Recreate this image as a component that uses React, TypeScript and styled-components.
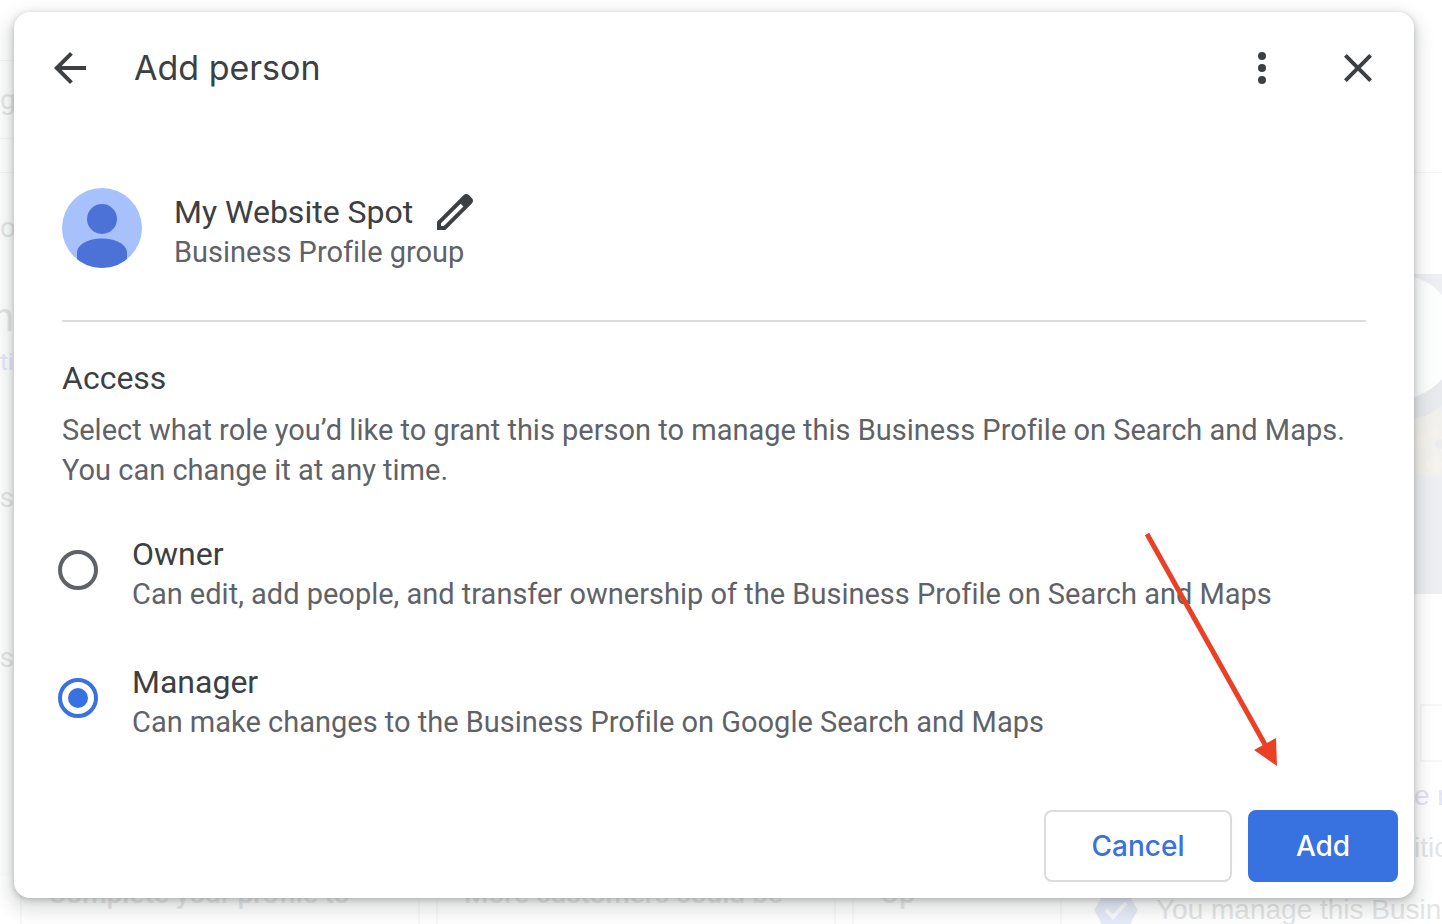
import React, { useState } from "react";
import styled, { createGlobalStyle } from "styled-components";

const GlobalStyle = createGlobalStyle`
  *, *::before, *::after { box-sizing: border-box; }
  html, body, #root { height: 100%; }
  body {
    margin: 0;
    background: #fff;
    font-family: Roboto, "Liberation Sans", sans-serif;
    font-variant-ligatures: none;
  }
  h1, h2, p { margin: 0; font-weight: 400; }
`;

const Page = styled.div`
  display: grid;
  grid-template: minmax(100%, auto) / minmax(0, 1fr);
  min-height: 100%;
  overflow: hidden;
`;

const Backdrop = styled.div`
  grid-area: 1 / 1;
  display: grid;
  grid-template: minmax(0, 1fr) 48px / 14px minmax(0, 1fr) 28px;
  height: 100vh;
  overflow: hidden;
  color: #e4e5e5;
  white-space: nowrap;
`;

const LeftStrip = styled.div`
  grid-area: 1 / 1;
  display: flex;
  flex-direction: column;
  padding-top: 60px;
  background: linear-gradient(#fff 28px, #fdfdfd 28px);
`;

const StripText = styled.span<{ $height: number; $size?: number; $tint?: string; $line?: boolean; $end?: boolean }>`
  display: flex;
  flex: none;
  align-items: center;
  justify-content: ${(p) => (p.$end ? "flex-end" : "flex-start")};
  width: 100%;
  height: ${(p) => p.$height}px;
  border-top: ${(p) => (p.$line ? "1px solid #f4f5f5" : "0")};
  color: ${(p) => p.$tint ?? "inherit"};
  font-size: ${(p) => p.$size ?? 28}px;
`;

const RightStrip = styled.div`
  grid-area: 1 / 3;
  display: flex;
  flex-direction: column;
  overflow: hidden;
  font-family: "Liberation Sans", sans-serif;
`;

const Rule = styled.div`
  height: 102px;
  margin-top: 172px;
  border-top: 1px solid #f6f6f7;
`;

const Photo = styled.svg`
  display: block;
  flex: none;
  width: 28px;
  height: 320px;
`;

const Outline = styled.div`
  flex: none;
  height: 58px;
  margin: 110px 0 8px 6px;
  border: 2px solid #f6f8f8;
  border-right: 0;
`;

const BottomStrip = styled.div`
  grid-area: 2 / 1 / 3 / 4;
  display: flex;
  align-items: flex-start;
  gap: 16px;
  padding-left: 20px;
  font-size: 28px;
  line-height: 36px;
`;

const Card = styled.div<{ $width: number; $open?: boolean }>`
  flex: none;
  width: ${(p) => p.$width}px;
  height: 48px;
  padding-left: 26px;
  border: solid #f8f8f9;
  border-width: ${(p) => (p.$open ? "0 0 0 2px" : "0 2px")};
  color: #e8e9e9;
  font-weight: 500;
`;

const Notice = styled.div`
  display: flex;
  flex: none;
  align-items: center;
  gap: 18px;
  height: 48px;
  padding: 20px 0 0 32px;
  border-left: 2px solid #f8f8f9;
  font-family: "Liberation Sans", sans-serif;

  svg { width: 44px; height: 44px; flex: none; }
`;

const Dialog = styled.form`
  grid-area: 1 / 1;
  position: relative;
  display: flex;
  flex-direction: column;
  margin: 12px 28px 26px 14px;
  border-radius: 16px;
  background: #fff;
  color: #3c4043;
  box-shadow: 0 2px 6px rgba(60, 64, 67, 0.3), 0 8px 16px 6px rgba(60, 64, 67, 0.15);
`;

const Header = styled.header`
  display: flex;
  align-items: center;
  height: 112px;
  padding: 0 32px;
  gap: 40px;
`;

const Title = styled.h1`
  flex: 1;
  font-family: Inter, "Liberation Sans", sans-serif;
  font-size: 34px;
  line-height: 48px;
`;

const Tools = styled.div`
  display: flex;
  gap: 48px;
`;

const IconButton = styled.button`
  display: block;
  flex: none;
  width: 48px;
  height: 48px;
  padding: 0;
  border: 0;
  background: none;
  color: #3c4043;
  cursor: pointer;

  svg { display: block; width: 100%; height: 100%; fill: currentColor; }
`;

const Body = styled.div`
  display: flex;
  flex-direction: column;
  padding: 64px 48px 0;
`;

const Profile = styled.section`
  display: flex;
  gap: 32px;
  padding-bottom: 52px;
  border-bottom: 2px solid #dadce0;
`;

const Avatar = styled.svg`
  flex: none;
  width: 80px;
  height: 80px;
`;

const NameRow = styled.div`
  display: flex;
  align-items: center;
  gap: 18px;
  height: 48px;
`;

const Heading = styled.h2`
  font-size: 32px;
  line-height: 40px;
`;

const Support = styled.p<{ $line?: number }>`
  color: #5f6368;
  font-size: 29px;
  line-height: ${(p) => p.$line ?? 40}px;
`;

const Access = styled.section`
  display: flex;
  flex-direction: column;
  gap: 12px;
  padding-top: 36px;
`;

const Options = styled.div`
  display: flex;
  flex-direction: column;
  gap: 48px;
  margin: 44px 0 0 -4px;
`;

const Option = styled.label`
  display: flex;
  align-items: flex-start;
  gap: 34px;
  cursor: pointer;
`;

const Radio = styled.input`
  appearance: none;
  flex: none;
  width: 40px;
  height: 40px;
  margin: 16px 0 0;
  border: 4px solid #5f6368;
  border-radius: 50%;

  &:checked {
    padding: 6px;
    border-color: #3871e0;
    background: #3871e0 content-box;
  }
`;

const OptionName = styled.span`
  display: block;
  font-size: 32px;
  line-height: 40px;
`;

const Footer = styled.footer`
  display: flex;
  justify-content: flex-end;
  gap: 16px;
  margin-top: auto;
  padding: 16px;
`;

const Button = styled.button<{ $primary?: boolean }>`
  height: 72px;
  min-width: ${(p) => (p.$primary ? 150 : 188)}px;
  padding: 0 32px;
  border: 2px solid ${(p) => (p.$primary ? "#3871e0" : "#dadce0")};
  border-radius: 8px;
  background: ${(p) => (p.$primary ? "#3871e0" : "#fff")};
  color: ${(p) => (p.$primary ? "#fff" : "#3871e0")};
  font-family: Inter, "Liberation Sans", sans-serif;
  font-size: 28px;
  font-weight: 500;
  cursor: pointer;
`;

const Pointer = styled.svg`
  position: absolute;
  right: 134px;
  bottom: 130px;
  width: 140px;
  height: 240px;
  pointer-events: none;
`;

const roles = [
  {
    id: "owner",
    name: "Owner",
    text: "Can edit, add people, and transfer ownership of the Business Profile on Search and Maps",
  },
  {
    id: "manager",
    name: "Manager",
    text: "Can make changes to the Business Profile on Google Search and Maps",
  },
];

function PageBehind() {
  return (
    <Backdrop aria-hidden="true">
      <LeftStrip>
        <StripText $height={78} $line>ge</StripText>
        <StripText $height={34} $line />
        <StripText $height={110} $line>or</StripText>
        <StripText $height={70} $size={40} $end>n</StripText>
        <StripText $height={20} $size={24} $tint="#e1e6f6">ti</StripText>
        <StripText $height={250} $end>s</StripText>
        <StripText $height={70} $end>s</StripText>
      </LeftStrip>
      <RightStrip>
        <Rule />
        <Photo viewBox="0 0 28 320">
          <rect width="28" height="320" fill="#eeeff2" />
          <ellipse cx="18" cy="170" rx="32" ry="33" fill="#f2f1ee" />
          <circle cx="6" cy="168" r="6" fill="#f5f3ed" />
          <circle cx="19" cy="158" r="5" fill="#f6f1eb" />
          <circle cx="20" cy="190" r="8" fill="#f5f3ed" />
          <circle cx="26" cy="170" r="5" fill="#ecebed" />
          <path d="M0 60H28V131Q16 142 0 145z" fill="#e9eaee" />
          <circle cx="-19" cy="63" r="63" fill="#fdfefe" />
        </Photo>
        <Outline />
        <StripText $height={52} $tint="#e4e2f4">e n</StripText>
        <StripText $height={52}>itio</StripText>
      </RightStrip>
      <BottomStrip>
        <Card $width={400}>Complete your profile to</Card>
        <Card $width={400}>More customers could be</Card>
        <Card $width={192} $open>Op</Card>
        <Notice>
          <svg viewBox="0 0 44 44">
            <path d="M22 0L28 5L36 4L38 12L44 22L38 32L36 40L28 39L22 44L16 39L8 40L6 32L0 22L6 12L8 4L16 5z" fill="#e6ebf8" />
            <path d="M12 22L19 29L32 15" fill="none" stroke="#fafbfd" strokeWidth="4" />
          </svg>
          You manage this Busin
        </Notice>
      </BottomStrip>
    </Backdrop>
  );
}

export default function App() {
  const [role, setRole] = useState("manager");
  return (
    <Page>
      <GlobalStyle />
      <PageBehind />
      <Dialog role="dialog" aria-labelledby="title" onSubmit={(e) => e.preventDefault()}>
        <Header>
          <IconButton type="button" aria-label="Back">
            <svg viewBox="0 0 24 24"><path d="M20 11H7.83l5.59-5.59L12 4l-8 8 8 8 1.41-1.41L7.83 13H20v-2z" /></svg>
          </IconButton>
          <Title id="title">Add person</Title>
          <Tools>
            <IconButton type="button" aria-label="More options">
              <svg viewBox="0 0 24 24">
                <circle cx="12" cy="6" r="2" />
                <circle cx="12" cy="12" r="2" />
                <circle cx="12" cy="18" r="2" />
              </svg>
            </IconButton>
            <IconButton type="button" aria-label="Close">
              <svg viewBox="0 0 24 24"><path d="M19 6.41L17.59 5 12 10.59 6.41 5 5 6.41 10.59 12 5 17.59 6.41 19 12 13.41 17.59 19 19 17.59 13.41 12z" /></svg>
            </IconButton>
          </Tools>
        </Header>
        <Body>
          <Profile>
            <Avatar viewBox="0 0 80 80" aria-hidden="true">
              <clipPath id="disc"><circle cx="40" cy="40" r="40" /></clipPath>
              <g clipPath="url(#disc)">
                <rect width="80" height="80" fill="#a6c1fc" />
                <circle cx="40" cy="31" r="15" fill="#4c72d8" />
                <path d="M15 80V65C15 56 27 50.5 40 50.5S65 56 65 65V80z" fill="#4c72d8" />
              </g>
            </Avatar>
            <div>
              <NameRow>
                <Heading>My Website Spot</Heading>
                <IconButton type="button" aria-label="Edit name">
                  <svg viewBox="0 0 24 24"><path d="M20.41 4.94l-1.35-1.35c-.78-.78-2.05-.78-2.83 0L3 16.82V21h4.18L20.41 7.77c.79-.78.79-2.05 0-2.83zm-14 14.12L5 19v-1.36l9.82-9.82 1.41 1.41-9.82 9.83z" /></svg>
                </IconButton>
              </NameRow>
              <Support $line={32}>Business Profile group</Support>
            </div>
          </Profile>
          <Access>
            <Heading>Access</Heading>
            <Support>
              Select what role you’d like to grant this person to manage this Business Profile on Search and Maps.
              <br />
              You can change it at any time.
            </Support>
          </Access>
          <Options role="radiogroup" aria-label="Access">
            {roles.map((r) => (
              <Option key={r.id}>
                <Radio type="radio" name="role" checked={role === r.id} onChange={() => setRole(r.id)} />
                <span>
                  <OptionName>{r.name}</OptionName>
                  <Support as="span">{r.text}</Support>
                </span>
              </Option>
            ))}
          </Options>
        </Body>
        <Footer>
          <Button type="button">Cancel</Button>
          <Button type="submit" $primary>Add</Button>
        </Footer>
        <Pointer viewBox="0 0 140 240" aria-hidden="true">
          <path d="M7 6L127 220" stroke="#ea4025" strokeWidth="5" />
          <path d="M137 238L114 222L136 210z" fill="#ea4025" />
        </Pointer>
      </Dialog>
    </Page>
  );
}
